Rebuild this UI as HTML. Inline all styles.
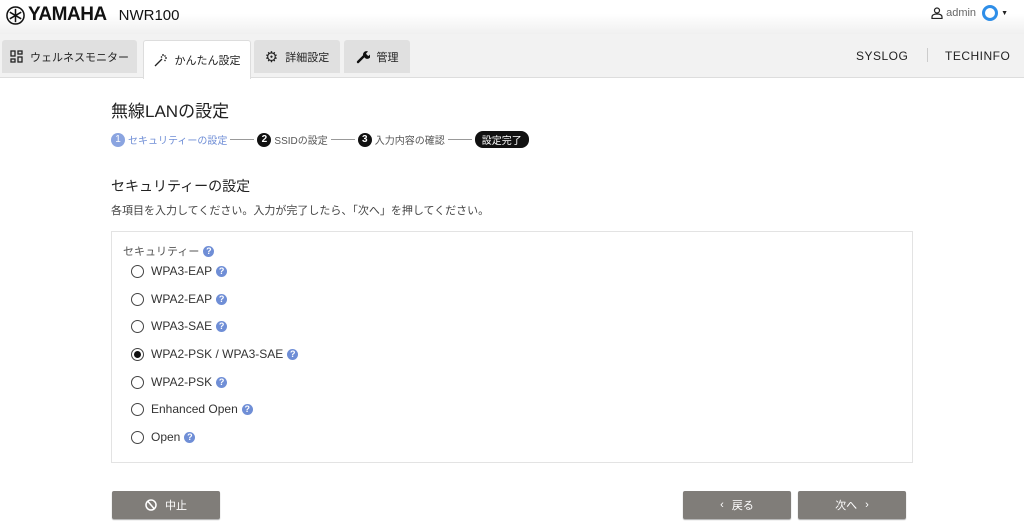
<!DOCTYPE html>
<html><head><meta charset="utf-8"><style>
*{box-sizing:border-box;margin:0;padding:0}
body{width:1024px;height:528px;overflow:hidden;background:#fff;font-family:"Liberation Sans","Noto Sans CJK JP",sans-serif;color:#222;position:relative}
.hdr{position:absolute;left:0;top:0;width:1024px;height:34px;background:linear-gradient(#fff 40%,#f0f0f0)}
.bar{position:absolute;left:0;top:34px;width:1024px;height:44px;background:#f2f2f2;border-bottom:1px solid #ddd}
.tab{position:absolute;top:6px;height:33px;background:#e0e0e0;border-radius:3px 3px 0 0;font-size:11px;display:flex;align-items:center;justify-content:center;gap:7px;color:#222}
.tab.act{background:#fff;height:39px;border:1px solid #ddd;border-bottom:none}
.abs{position:absolute}
.step{font-size:10px;color:#555;display:flex;align-items:center}
.num{width:14px;height:14px;border-radius:50%;background:#111;color:#fff;font-size:10px;display:inline-flex;align-items:center;justify-content:center;margin-right:3px;font-weight:bold}
.box{position:absolute;left:111px;top:231px;width:802px;height:232px;border:1px solid #e3e3e3}
.opt{position:absolute;left:19px;font-size:12px;color:#333;display:flex;align-items:center}
.rad{width:13px;height:13px;border:1.3px solid #444;border-radius:50%;margin-right:7px;display:inline-flex;align-items:center;justify-content:center}
.q{display:inline-flex;width:11px;height:11px;border-radius:50%;background:#6f8ed6;color:#fff;font-size:9px;font-weight:bold;align-items:center;justify-content:center;margin-left:4px}
.btn{position:absolute;top:491px;height:28px;width:108px;background:#807d79;border-radius:2px;color:#fff;font-size:11px;display:flex;align-items:center;justify-content:center;gap:8px;box-shadow:0 1px 1px #aaa}
</style></head><body>
<div class="hdr"></div>
<div class="abs" style="left:6px;top:4px;display:flex;align-items:center">
<svg width="19" height="19" viewBox="0 0 20 20"><circle cx="10" cy="10" r="9" fill="none" stroke="#111" stroke-width="1.6"/><g stroke="#111" stroke-width="1.6"><line x1="10" y1="3" x2="10" y2="17"/><line x1="4" y1="6.5" x2="16" y2="13.5"/><line x1="4" y1="13.5" x2="16" y2="6.5"/></g></svg>
<span style="font-size:19px;font-weight:bold;letter-spacing:-0.5px;margin-left:3px;color:#111">YAMAHA</span>
<span style="font-size:15px;margin-left:12px;color:#111">NWR100</span></div>
<div class="abs" style="right:16px;top:5px;display:flex;align-items:center;font-size:11px;color:#666">
<svg width="12" height="12" viewBox="0 0 12 12"><circle cx="6" cy="3.5" r="2.5" fill="none" stroke="#222" stroke-width="1.2"/><path d="M1 11.5v-1.5c0-2 2-3 5-3s5 1 5 3v1.5z" fill="none" stroke="#222" stroke-width="1.2"/></svg>
<span style="margin:0 6px 0 3px">admin</span>
<span style="width:16px;height:16px;border:3px solid #2e8ee8;border-radius:50%;display:inline-block"></span>
<span style="font-size:7px;margin-left:3px;color:#222">▼</span></div>
<div class="bar">
<div class="tab" style="left:2px;width:135px"><svg width="13" height="13" viewBox="0 0 13 13" fill="none" stroke="#222" stroke-width="1.3"><rect x="1" y="1" width="4" height="5"/><rect x="8" y="1" width="4" height="3"/><rect x="1" y="9" width="4" height="3"/><rect x="8" y="7" width="4" height="5"/></svg>ウェルネスモニター</div>
<div class="tab act" style="left:143px;width:108px"><svg width="14" height="14" viewBox="0 0 14 14" fill="none" stroke="#222" stroke-width="1.3"><line x1="1" y1="13" x2="8" y2="6"/><path d="M9 1v2M11.5 2.5l-1 1M13 5h-2M7 3.5l1 1M11.5 8l-1-1" /></svg>かんたん設定</div>
<div class="tab" style="left:254px;width:86px"><span style="font-size:15px">⚙</span>詳細設定</div>
<div class="tab" style="left:344px;width:66px"><svg width="14" height="14" viewBox="0 0 14 14"><path d="M2 12l6-6" stroke="#111" stroke-width="2.4" stroke-linecap="round"/><path d="M7 5a3.5 3.5 0 0 1 5-3.5l-2 2 1 1.5 1.5 1 2-2A3.5 3.5 0 0 1 9 8z" fill="#111"/></svg>管理</div>
<div class="abs" style="left:856px;top:15px;font-size:12px;letter-spacing:0.5px">SYSLOG</div>
<div class="abs" style="left:927px;top:14px;width:1px;height:14px;background:#ccc"></div>
<div class="abs" style="left:945px;top:15px;font-size:12px;letter-spacing:0.5px">TECHINFO</div>
</div>
<div class="abs" style="left:111px;top:97px;font-size:17px">無線LANの設定</div>
<div class="abs" style="left:111px;top:131px;display:flex;align-items:center;gap:3px">
<div class="step" style="color:#6f8ed6"><span class="num" style="background:#8aa4e0;font-weight:normal">1</span>セキュリティーの設定</div><span style="width:24px;height:1px;background:#999"></span>
<div class="step"><span class="num">2</span>SSIDの設定</div><span style="width:24px;height:1px;background:#999"></span>
<div class="step"><span class="num">3</span>入力内容の確認</div><span style="width:24px;height:1px;background:#999"></span>
<div class="step" style="background:#111;color:#fff;border-radius:8px;padding:1px 7px">設定完了</div></div>
<div class="abs" style="left:111px;top:176px;font-size:14px">セキュリティーの設定</div>
<div class="abs" style="left:111px;top:202px;font-size:11px;color:#444">各項目を入力してください。入力が完了したら、「次へ」を押してください。</div>
<div class="box">
<div class="abs" style="left:11px;top:11px;font-size:11px;color:#555;display:flex;align-items:center">セキュリティー<span class="q">?</span></div>
<div class="opt" style="top:32px"><span class="rad"></span>WPA3-EAP<span class="q">?</span></div>
<div class="opt" style="top:60px"><span class="rad"></span>WPA2-EAP<span class="q">?</span></div>
<div class="opt" style="top:87px"><span class="rad"></span>WPA3-SAE<span class="q">?</span></div>
<div class="opt" style="top:115px"><span class="rad"><span style="width:7px;height:7px;background:#111;border-radius:50%"></span></span>WPA2-PSK / WPA3-SAE<span class="q">?</span></div>
<div class="opt" style="top:143px"><span class="rad"></span>WPA2-PSK<span class="q">?</span></div>
<div class="opt" style="top:170px"><span class="rad"></span>Enhanced Open<span class="q">?</span></div>
<div class="opt" style="top:198px"><span class="rad"></span>Open<span class="q">?</span></div>
</div>
<div class="btn" style="left:112px"><svg width="12" height="12" viewBox="0 0 12 12" fill="none" stroke="#fff" stroke-width="1.5"><circle cx="6" cy="6" r="5"/><line x1="3" y1="2.5" x2="9" y2="9.5"/></svg>中止</div>
<div class="btn" style="left:683px"><span>‹</span>戻る</div>
<div class="btn" style="left:798px">次へ<span>›</span></div>
</body></html>
